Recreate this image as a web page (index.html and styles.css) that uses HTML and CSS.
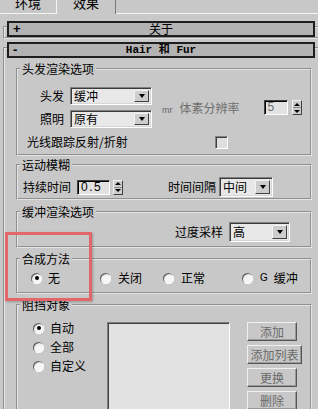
FILE: index.html
```html
<!DOCTYPE html>
<html lang="zh-CN">
<head>
    <meta charset="UTF-8">
    <meta name="viewport" content="width=device-width, initial-scale=1.0">
    <title>Hair 和 Fur</title>
    <link rel="stylesheet" href="styles.css">
</head>
<body>

<div class="tabs">
    <div class="tab tab-env"><span>环境</span></div>
    <div class="tab tab-fx"><span>效果</span></div>
    <div class="tab-fill"></div>
</div>

<div class="rollout rollout-about">
    <div class="bar"><span class="sign">+</span><span class="bar-title">关于</span></div>
</div>

<div class="rollout rollout-hair">
    <div class="bar"><span class="sign">-</span><span class="bar-title mono">Hair 和 Fur</span></div>

    <fieldset class="group g-render">
        <legend>头发渲染选项</legend>
        <div class="hair-top">
            <div class="hair-grid">
                <span class="lbl">头发</span>
                <div class="combo"><span class="combo-text">缓冲</span><span class="combo-btn"></span></div>
                <span class="lbl">照明</span>
                <div class="combo"><span class="combo-text">原有</span><span class="combo-btn"></span></div>
            </div>
            <div class="voxel">
                <span class="mr">mr</span>
                <span class="dim">体素分辨率</span>
                <div class="spin spin-voxel">
                    <span class="spin-field dim">5</span>
                    <span class="spin-arrows"><i class="up"></i><i class="down"></i></span>
                </div>
            </div>
        </div>
        <div class="ray">
            <span class="ray-label">光线跟踪反射/折射</span>
            <span class="check"></span>
        </div>
    </fieldset>

    <fieldset class="group g-motion">
        <legend>运动模糊</legend>
        <div class="motion-row">
            <span>持续时间</span>
            <div class="spin spin-dur">
                <span class="spin-field">0.5</span>
                <span class="spin-arrows"><i class="up"></i><i class="down"></i></span>
            </div>
            <span class="interval-lbl">时间间隔</span>
            <div class="combo combo-tall combo-interval"><span class="combo-text">中间</span><span class="combo-btn"></span></div>
        </div>
    </fieldset>

    <fieldset class="group g-buffer">
        <legend>缓冲渲染选项</legend>
        <div class="sample-row">
            <span>过度采样</span>
            <div class="combo combo-tall combo-sample"><span class="combo-text">高</span><span class="combo-btn"></span></div>
        </div>
    </fieldset>

    <fieldset class="group g-comp">
        <legend>合成方法</legend>
        <div class="comp-row">
            <label class="opt opt-none"><span class="radio on"></span>无</label>
            <label class="opt opt-off"><span class="radio"></span>关闭</label>
            <label class="opt opt-normal"><span class="radio"></span>正常</label>
            <label class="opt"><span class="radio"></span><span class="g">G</span>缓冲</label>
        </div>
    </fieldset>

    <fieldset class="group g-occl">
        <legend>阻挡对象</legend>
        <div class="occl-row">
            <div class="occl-opts">
                <label class="opt"><span class="radio on"></span>自动</label>
                <label class="opt"><span class="radio"></span>全部</label>
                <label class="opt"><span class="radio"></span>自定义</label>
            </div>
            <div class="listbox"></div>
            <div class="occl-btns">
                <button class="btn" disabled>添加</button>
                <button class="btn btn-wide" disabled>添加列表</button>
                <button class="btn" disabled>更换</button>
                <button class="btn" disabled>删除</button>
            </div>
        </div>
    </fieldset>
</div>

<div class="mark"></div>

</body>
</html>
```

FILE: styles.css
```css
* {
    box-sizing: border-box;
}
body {
    margin: 0;
    position: relative;
    overflow: hidden;
    background-color: #c8c8c8;
    font-family: "Noto Sans CJK SC", sans-serif;
    font-size: 12px;
    line-height: 16px;
    color: #000;
}

/* tabs at the top, scrolled half out of view */
.tabs {
    display: flex;
    height: 14px;
}
.tab {
    height: 14px;
    overflow: hidden;
    font-size: 13px;
    text-align: center;
    border-bottom: 1px solid #f4f4f4;
}
.tab span {
    display: block;
    margin-top: -5px;
    line-height: 16px;
}
.tab-env {
    width: 56px;
}
.tab-fx {
    width: 60px;
    border-left: 1px solid #f4f4f4;
    border-right: 1px solid #7a7a7a;
    border-bottom: none;
}
.tab-fill {
    flex: 1;
    border-bottom: 1px solid #f4f4f4;
}

/* rollouts */
.rollout {
    margin-left: 3px;
    border: 2px groove #e4e4e4;
    border-right: none;
}
.rollout-about {
    margin-top: 12px;
}
.rollout-hair {
    margin-top: 8px;
    border-bottom: none;
}
.bar {
    margin: -7px 0 0 2px;
    width: 308px;
    height: 16px;
    background-color: #b3b3b3;
    border: 2px solid #1e1e1e;
    display: grid;
    grid-template-columns: 1fr auto 1fr;
    align-items: center;
    line-height: 12px;
}
.sign {
    padding-left: 4px;
    font-family: "Liberation Sans", sans-serif;
    font-weight: bold;
    font-size: 13px;
}
.bar-title {
    font-size: 12px;
}
.bar-title.mono {
    font-family: "Liberation Mono", "Noto Sans CJK SC", monospace;
    font-size: 11px;
    font-weight: bold;
}

/* group boxes */
.group {
    margin: 3px 0 0 11px;
    width: 296px;
    min-width: 0;
    border: 2px groove #e4e4e4;
    padding: 0;
}
.group legend {
    margin-left: 2px;
    padding: 0 2px;
    line-height: 16px;
    font-size: 12px;
}
.g-render {
    padding: 10px 0 3px;
}
.g-motion {
    margin-top: 1px;
    padding: 4px 0 1px;
}
.g-buffer {
    margin-top: 4px;
    padding: 2px 0 4px;
}
.g-comp {
    padding: 3px 0 6px;
}
.g-occl {
    padding: 7px 0 0;
}

/* common widgets */
.combo {
    display: flex;
    width: 82px;
    height: 18px;
    padding: 2px;
    background-color: #e8e8e8;
    border: 1px solid;
    border-color: #808080 #fff #fff #808080;
    box-shadow: inset 1px 1px 0 #3a3a3a, inset -1px -1px 0 #d6d6d6;
}
.combo-tall {
    height: 20px;
}
.combo-text {
    flex: 1;
    display: flex;
    align-items: center;
    padding-left: 1px;
}
.combo-btn {
    width: 15px;
    background-color: #cdcdcd;
    border: 1px solid;
    border-color: #f2f2f2 #404040 #404040 #f2f2f2;
    display: flex;
    align-items: center;
    justify-content: center;
}
.combo-btn::after {
    content: "";
    border-left: 3.5px solid transparent;
    border-right: 3.5px solid transparent;
    border-top: 4px solid #000;
}

.spin {
    display: flex;
    align-items: center;
}
.spin-field {
    height: 15px;
    padding-left: 3px;
    background-color: #e2e2e2;
    border: 1px solid;
    border-color: #404040 #fff #fff #404040;
    box-shadow: inset 1px 1px 0 #000;
    font-family: "Liberation Sans", sans-serif;
    line-height: 13px;
}
.spin-arrows {
    width: 10px;
    height: 15px;
    display: flex;
    flex-direction: column;
    background-color: #cdcdcd;
    border: 1px solid;
    border-color: #f2f2f2 #404040 #404040 #f2f2f2;
}
.spin-arrows i {
    flex: 1;
    display: flex;
    align-items: center;
    justify-content: center;
}
.spin-arrows .up {
    border-bottom: 1px solid #8a8a8a;
}
.spin-arrows .up::after {
    content: "";
    border-left: 3px solid transparent;
    border-right: 3px solid transparent;
    border-bottom: 3px solid #000;
}
.spin-arrows .down::after {
    content: "";
    border-left: 3px solid transparent;
    border-right: 3px solid transparent;
    border-top: 3px solid #000;
}

.check {
    width: 13px;
    height: 13px;
    background-color: #dedede;
    border: 1px solid;
    border-color: #808080 #fff #fff #808080;
    box-shadow: inset 1px 1px 0 #404040;
}

.radio {
    flex: none;
    width: 11px;
    height: 11px;
    border-radius: 50%;
    background: radial-gradient(circle at 60% 60%, #f6f6f6 0 35%, #cfcfcf 100%);
    box-shadow: inset 1px 1px 0 #5e5e5e, inset -1px -1px 0 #fafafa;
    display: flex;
    align-items: center;
    justify-content: center;
}
.radio.on::after {
    content: "";
    width: 4px;
    height: 4px;
    border-radius: 50%;
    background-color: #000;
}
.opt {
    display: flex;
    align-items: center;
    gap: 6px;
    height: 16px;
}

.dim {
    color: #6e6e6e;
}

/* hair render options */
.hair-top {
    display: flex;
    align-items: center;
}
.hair-grid {
    display: grid;
    grid-template-columns: 46px 82px;
    column-gap: 6px;
    row-gap: 5px;
    align-items: center;
}
.lbl {
    justify-self: end;
}
.voxel {
    display: flex;
    align-items: center;
    margin-left: 10px;
}
.mr {
    margin: 4px 7px 0 0;
    font-family: "Liberation Sans", sans-serif;
    font-size: 9px;
    color: #666;
}
.spin-voxel {
    margin-left: 24px;
    gap: 4px;
}
.spin-voxel .spin-field {
    width: 24px;
}
.ray {
    display: flex;
    align-items: center;
    height: 18px;
    margin-top: 5px;
    padding-left: 9px;
}
.ray-label {
    width: 188px;
}

/* motion blur */
.motion-row {
    display: flex;
    align-items: center;
    height: 20px;
    padding-left: 5px;
}
.spin-dur {
    margin-left: 6px;
    gap: 3px;
}
.spin-dur .spin-field {
    width: 33px;
    letter-spacing: 1.5px;
}
.interval-lbl {
    margin-left: 45px;
}
.combo-interval {
    margin-left: 3px;
    width: 54px;
}

/* buffer options */
.sample-row {
    display: flex;
    align-items: center;
    height: 20px;
    padding-left: 157px;
}
.combo-sample {
    margin-left: 6px;
    width: 61px;
}

/* composite method */
.comp-row {
    display: flex;
    padding-left: 13px;
}
.opt-none {
    width: 69px;
}
.opt-off {
    width: 63px;
    gap: 7px;
}
.opt-normal {
    width: 79px;
    gap: 7px;
}
.g {
    margin-left: 1px;
    font-family: "Liberation Sans", sans-serif;
    font-size: 10px;
}

/* occlusion objects */
.occl-row {
    display: flex;
    align-items: flex-start;
    padding-left: 15px;
}
.occl-opts {
    width: 74px;
    display: flex;
    flex-direction: column;
    gap: 3px;
}
.listbox {
    width: 123px;
    height: 100px;
    margin-top: 2px;
    background-color: #e2e2e2;
    border: 1px solid;
    border-color: #808080 #fff #fff #808080;
    box-shadow: inset 1px 1px 0 #404040;
}
.occl-btns {
    margin: 2px 0 0 17px;
    display: flex;
    flex-direction: column;
    align-items: flex-start;
    gap: 4px;
}
.btn {
    width: 50px;
    height: 19px;
    padding: 0;
    background-color: #c8c8c8;
    border: 1px solid;
    border-color: #f0f0f0 #555 #555 #f0f0f0;
    box-shadow: inset -1px -1px 0 #999;
    font: inherit;
    line-height: 17px;
    color: #6a6a6a;
}
.btn-wide {
    width: 55px;
}

/* red highlight drawn over the screenshot */
.mark {
    position: absolute;
    left: 5px;
    top: 232px;
    width: 87px;
    height: 69px;
    border: 3px solid #e3666a;
    box-shadow: 1px 1px 2px rgba(0, 0, 0, 0.25);
}
```
